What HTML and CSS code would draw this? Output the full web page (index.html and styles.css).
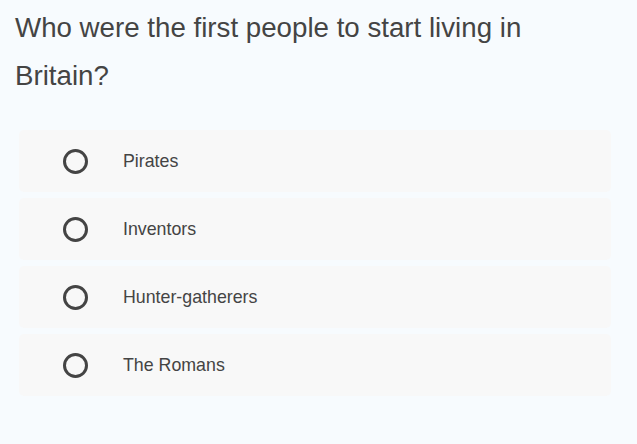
FILE: index.html
```html
<!DOCTYPE html>
<html>
<head>
<meta charset="utf-8">
<link rel="stylesheet" href="styles.css">
</head>
<body>
<div class="quiz">
  <h1 class="question">Who were the first people to start living in Britain?</h1>
  <ul class="options">
    <li class="option"><span class="radio"></span><span class="label">Pirates</span></li>
    <li class="option"><span class="radio"></span><span class="label">Inventors</span></li>
    <li class="option"><span class="radio"></span><span class="label">Hunter-gatherers</span></li>
    <li class="option"><span class="radio"></span><span class="label">The Romans</span></li>
  </ul>
</div>
</body>
</html>
```
FILE: styles.css
```css
html, body {
  margin: 0;
  padding: 0;
  background: #f7fbfe;
}
body {
  font-family: "Liberation Sans", Arial, sans-serif;
  color: #444;
}
.quiz {
  width: 637px;
  padding: 4px 26px 0 15px;
  box-sizing: border-box;
}
.question {
  margin: 0;
  font-size: 27.7px;
  font-weight: normal;
  line-height: 48px;
  color: #444;
}
.options {
  list-style: none;
  margin: 30px 0 0 4px;
  padding: 0;
  display: flex;
  flex-direction: column;
  gap: 6px;
}
.option {
  height: 62px;
  background: #f8f8f8;
  border-radius: 5px;
  display: flex;
  align-items: center;
  padding-left: 44px;
}
.radio {
  width: 25px;
  height: 25px;
  box-sizing: border-box;
  border: 3px solid #444;
  border-radius: 50%;
  flex: none;
}
.label {
  margin-left: 35px;
  font-size: 17.8px;
  color: #444;
}
```
